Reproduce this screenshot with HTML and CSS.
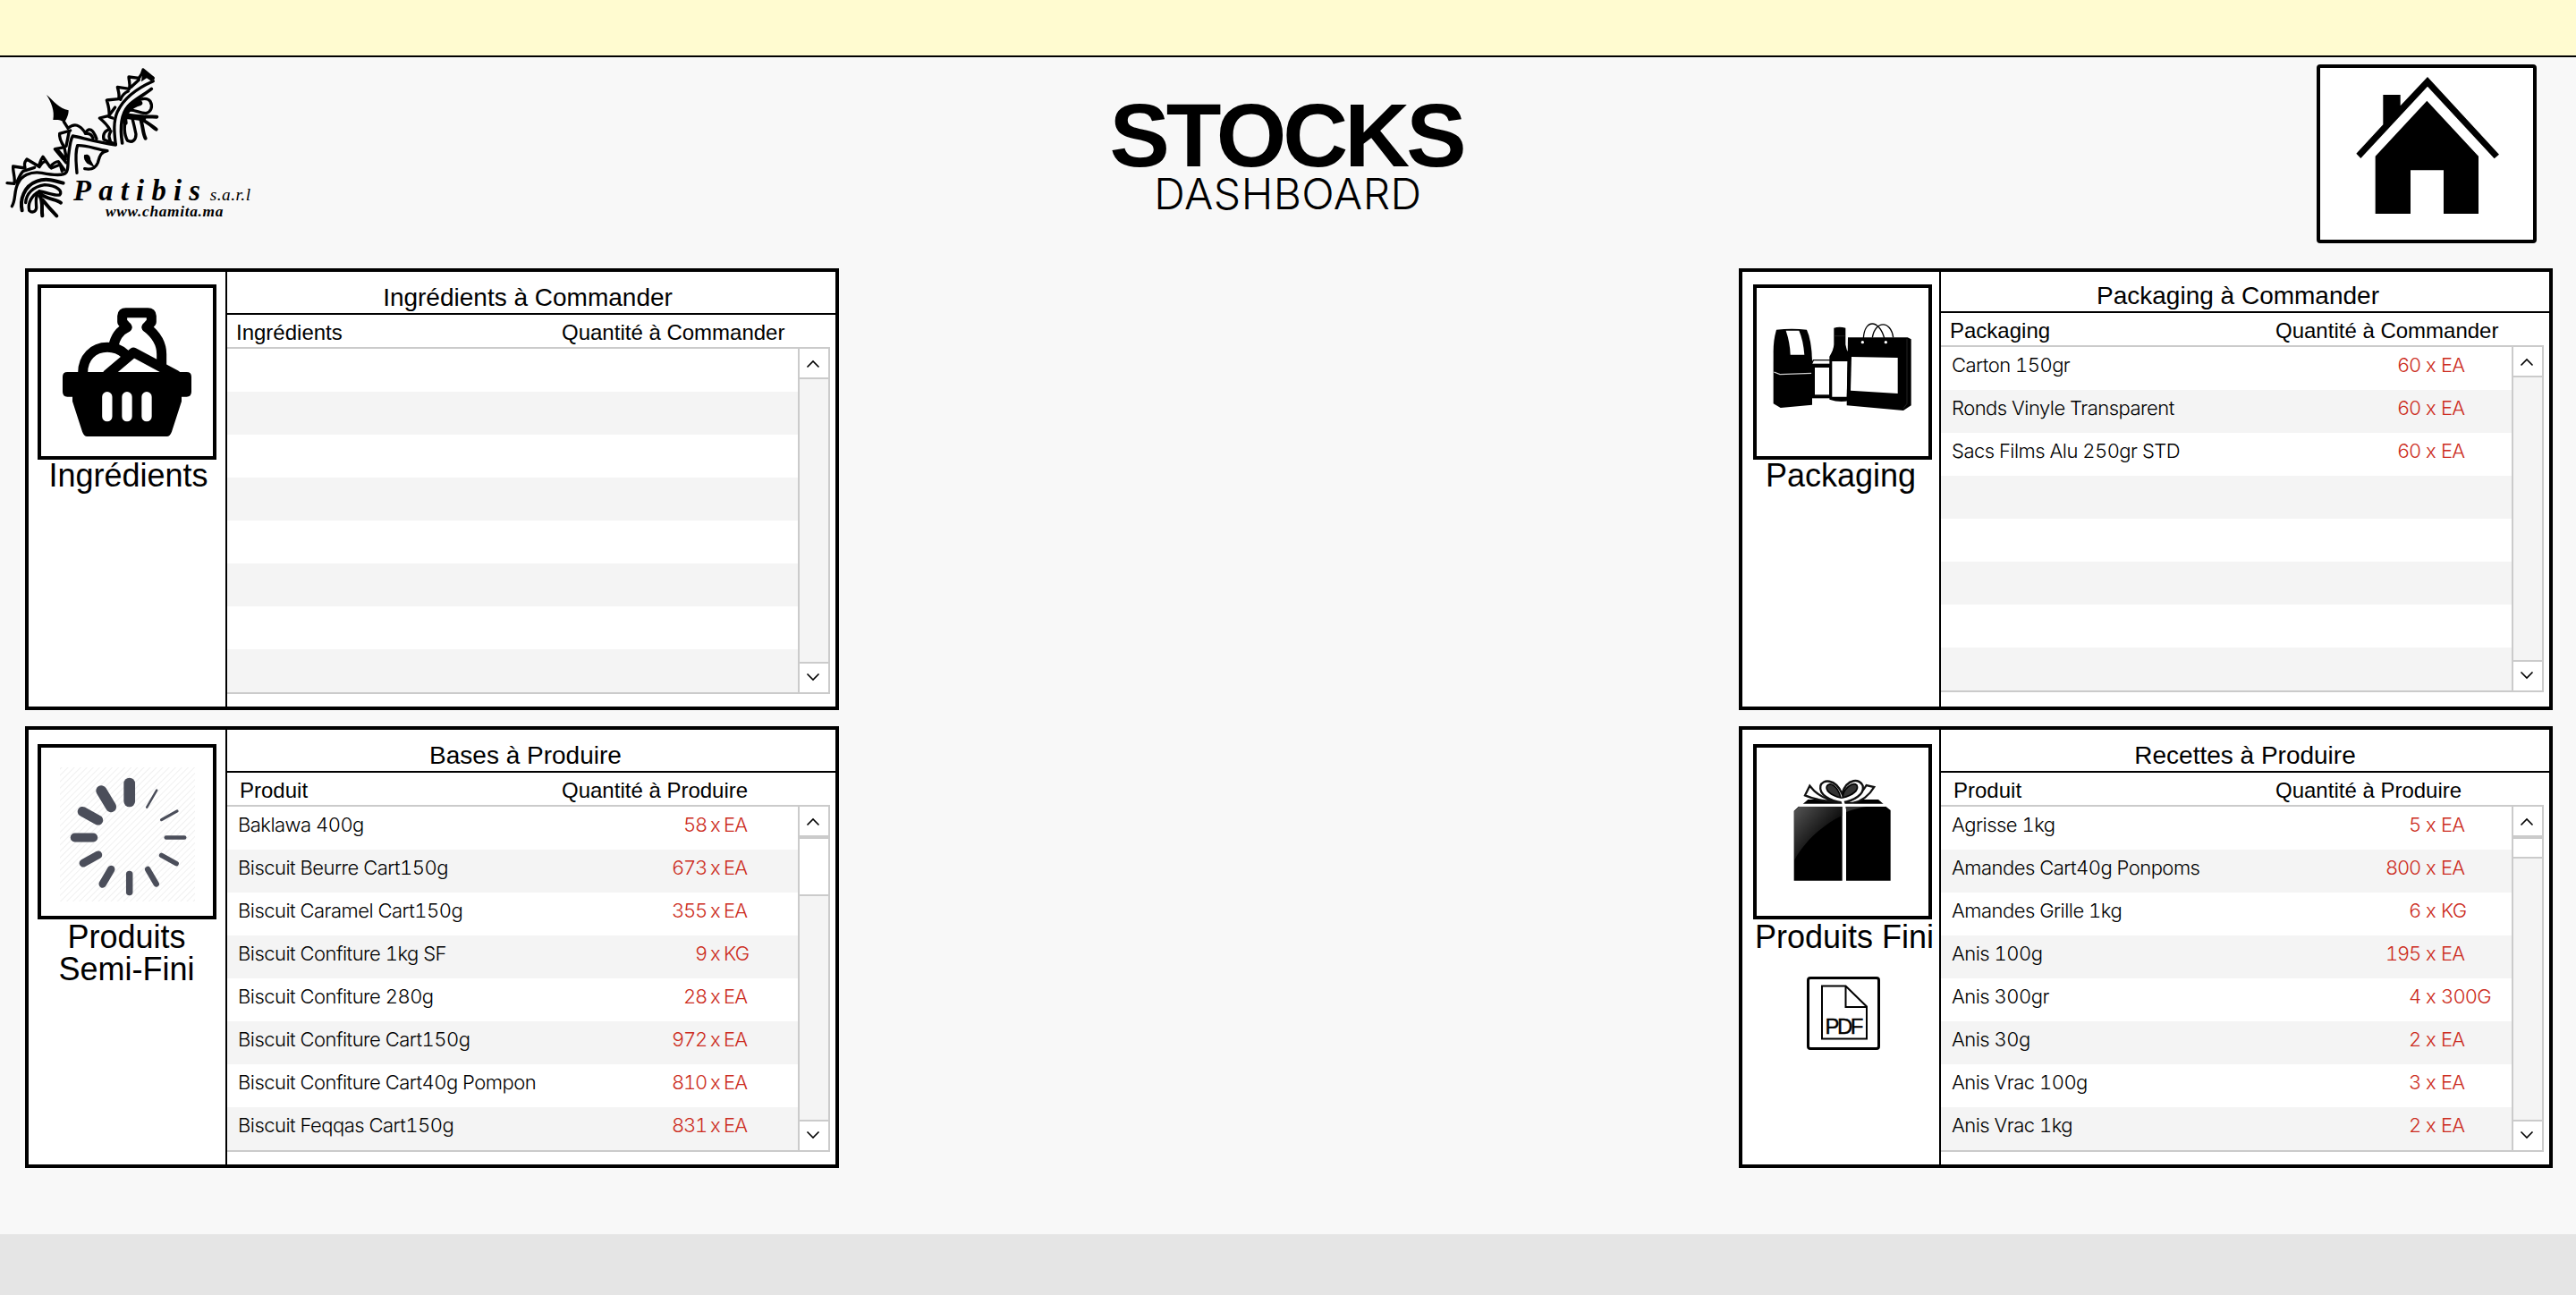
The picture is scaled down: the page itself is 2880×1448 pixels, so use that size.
FILE: index.html
```html
<!DOCTYPE html>
<html lang="fr">
<head>
<meta charset="utf-8">
<title>Stocks Dashboard</title>
<link rel="stylesheet" href="styles.css">
</head>
<body>
<div class="topbar"></div>
<header class="header">
  <svg class="logo" viewBox="0 42 900 588" width="300" height="196" aria-label="Patibis s.a.r.l">
    <g fill="none" stroke="#000" stroke-width="10" stroke-linecap="round" stroke-linejoin="round">
      <path d="M40 542C54 520 46 492 60 466C72 440 100 424 140 430C170 436 195 440 214 434C232 428 226 400 230 370C234 340 236 318 244 306C276 312 320 326 388 336C384 300 378 262 394 224C412 186 450 150 514 122"/>
      <path d="M24 464L48 466C52 445 42 425 44 408L84 414C82 402 80 396 90 384L130 408C134 396 136 386 144 376L168 410C178 398 186 392 196 392L216 420" />
      <path d="M56 462C66 440 70 430 78 424L116 412M132 410C138 400 146 392 152 392M172 414L202 402L208 424"/>
      <path d="M222 396L184 350L216 344C204 326 198 310 200 298L236 288"/>
      <path d="M220 384L196 356M216 346L222 376"/>
      <path d="M214 258L228 280C250 262 268 268 286 296C298 276 312 282 324 316M286 298C300 296 308 300 312 314M232 290L222 340"/>
      <path d="M388 334L348 318C344 300 352 288 368 284C358 266 346 256 334 246L366 238C368 216 362 200 358 186L398 182C402 166 396 152 394 142L434 148C438 132 432 120 432 108L466 112C476 100 478 94 480 84L514 112"/>
      <path d="M372 330C366 312 362 304 372 290M366 242L378 246M370 232L386 210M404 184C410 168 420 160 430 156M440 142L466 118"/>
      <path d="M258 430C256 400 250 366 260 338C290 336 320 350 360 356C336 360 334 376 328 396C320 416 304 420 284 416"/>
      <path d="M74 556C66 520 80 474 124 458C154 446 186 456 212 464" stroke-width="12"/>
      <path d="M86 530C88 500 110 476 150 470C192 472 212 492 200 504C186 508 160 496 132 492"/>
      <path d="M132 492C108 504 92 530 98 556C108 566 120 560 122 548C122 530 116 512 132 492" stroke-width="10"/>
      <path d="M134 508C146 530 138 550 142 574M142 520C158 540 176 560 190 574M136 500C160 520 190 518 204 530" stroke-width="12"/>
      <path d="M410 330C404 290 404 236 430 206C450 184 484 168 508 148" stroke-width="11"/>
      <path d="M430 212C456 184 490 172 504 190C514 208 506 226 490 230C466 230 450 216 432 220"/>
      <path d="M424 240C414 266 416 304 428 322C444 330 456 320 456 300C450 270 446 256 442 240" />
      <path d="M470 246C480 270 478 296 488 314M476 252C496 260 512 276 524 284M460 240C484 244 506 240 526 242" stroke-width="12"/>
      <path d="M420 262C414 230 434 206 470 196" stroke-width="16"/>
      <path d="M430 240L480 246" stroke-width="20"/>
    </g>
    <path d="M156 168C180 188 198 214 230 220C230 238 222 250 216 262C204 250 190 252 178 252C184 222 172 194 156 168ZM478 86L516 108L510 124L492 112L474 124ZM282 370C296 364 304 374 304 386L318 412L292 398C284 390 280 382 282 370Z"/>
    <text class="logo-name" x="246" y="522" textLength="426">Patibis</text>
    <text class="logo-suffix" x="704" y="522" textLength="136">s.a.r.l</text>
    <text class="logo-url" x="354" y="575" textLength="394">www.chamita.ma</text>
  </svg>
  <div class="heading">
    <h1>STOCKS</h1>
    <p>DASHBOARD</p>
  </div>
  <a class="home" href="#" aria-label="Accueil">
    <svg viewBox="72 78 714 576" width="238" height="192">
      <path d="M432 108L672 368L656 382L432 140L208 381L193 365L283 268V168H341V205Z"/>
      <path d="M430 188L603 374V567H486V421H375V567H257V374Z"/>
    </svg>
  </a>
</header>

<main class="board">
  <section class="card ingredients">
    <div class="side">
      <div class="tile">
        <svg viewBox="78 96 576 564" width="192" height="188">
          <g fill="none" stroke="#000" stroke-width="33" stroke-linejoin="round" stroke-linecap="round">
            <path d="M366 228C340 240 326 262 320 292M432 228C468 256 482 290 482 318V360"/>
            <path d="M366 228L350 210V190Q350 179 362 179H436Q448 179 448 190V210L432 228"/>
            <path d="M218 380C218 330 252 295 300 295C326 295 345 304 360 318"/>
            <path d="M300 386L388 312L530 388"/>
          </g>
          <path d="M166 378H566Q582 378 582 394V444Q582 461 566 461H549V476L516 578Q510 594 500 594H232Q222 594 216 578L183 476V461H166Q150 461 150 444V394Q150 378 166 378Z"/>
          <path d="M299.500 461V527M366 461V527M432 461V527" stroke="#fff" stroke-width="34" stroke-linecap="round"/>
        </svg>
      </div>
      <div class="label">Ingrédients</div>
    </div>
    <div class="main">
      <h2>Ingrédients à Commander</h2>
      <div class="cols"><span>Ingrédients</span><span>Quantité à Commander</span></div>
      <div class="list">
        <ul class="rows"><li></li><li></li><li></li><li></li><li></li><li></li><li></li><li></li></ul>
        <div class="scroll">
          <div class="btn"><svg viewBox="0 0 32 32"><path d="M8.500 20.500L15 14L21.500 20.500"/></svg></div>
          <div class="track"></div>
          <div class="btn"><svg viewBox="0 0 32 32"><path d="M8.500 11.500L15 18L21.500 11.500"/></svg></div>
        </div>
      </div>
    </div>
  </section>

  <section class="card packaging">
    <div class="side">
      <div class="tile">
        <svg viewBox="102 96 576 564" width="192" height="188">
          <path d="M168 236Q220 230 270 236Q286 270 288 340V488L182 498L158 484V310Q158 270 168 236Z"/>
          <path d="M200 239H244Q258 270 262 320H215Q214 280 200 239Z" fill="#fff"/>
          <path d="M160 378L180 386L286 382" fill="none" stroke="#ccc" stroke-width="4"/>
          <path d="M286 352L292 338H352" fill="none" stroke="#000" stroke-width="4"/>
          <path d="M286 350H352V466H286Z"/>
          <path d="M297 363H345V454H297Z" fill="#fff"/>
          <path d="M361 230Q380 224 400 230V286Q402 304 412 316V474Q380 482 346 470V326Q360 304 361 286Z"/>
          <path d="M355 342H407L404 461H355Z" fill="#fff"/>
          <path d="M362 257H398" stroke="#333" stroke-width="2"/>
          <path d="M408 262L608 262L620 268V490L594 507L404 490Z"/>
          <path d="M420 327L575 330V450L417 440Z" fill="#fff"/>
          <path d="M606 266V484L594 500" fill="none" stroke="#333" stroke-width="2"/>
          <path d="M460 264C464 200 512 200 530 264M490 262C500 204 552 204 560 262" fill="none" stroke="#000" stroke-width="4"/>
          <g fill="#fff"><circle cx="457" cy="278" r="5"/><circle cx="535" cy="278" r="5"/></g>
        </svg>
      </div>
      <div class="label">Packaging</div>
    </div>
    <div class="main">
      <h2>Packaging à Commander</h2>
      <div class="cols"><span>Packaging</span><span>Quantité à Commander</span></div>
      <div class="list">
        <ul class="rows">
          <li><span>Carton 150gr</span><b>60</b><i>x</i><em>EA</em></li>
          <li><span>Ronds Vinyle Transparent</span><b>60</b><i>x</i><em>EA</em></li>
          <li><span>Sacs Films Alu 250gr STD</span><b>60</b><i>x</i><em>EA</em></li>
          <li></li><li></li><li></li><li></li><li></li>
        </ul>
        <div class="scroll">
          <div class="btn"><svg viewBox="0 0 32 32"><path d="M8.500 20.500L15 14L21.500 20.500"/></svg></div>
          <div class="track"></div>
          <div class="btn"><svg viewBox="0 0 32 32"><path d="M8.500 11.500L15 18L21.500 11.500"/></svg></div>
        </div>
      </div>
    </div>
  </section>

  <section class="card bases">
    <div class="side">
      <div class="tile">
        <svg viewBox="46 836 192 188" width="192" height="188">
          <defs><pattern id="hatch" width="5" height="5" patternUnits="userSpaceOnUse" patternTransform="rotate(45)"><path d="M0 0V5" stroke="#f0f0f0" stroke-width="2"/></pattern></defs>
          <path d="M67 858H218V1008H67Z" fill="url(#hatch)"/>
          <g transform="translate(144.700 936.500)" stroke="#4b4e5a" stroke-linecap="round">
            <path d="M0 -40.500V-60.500" stroke-width="12.700"/>
            <path d="M0 -39V-61" stroke-width="2.500" transform="rotate(30)"/>
            <path d="M0 -41V-61" stroke-width="3.200" transform="rotate(61)"/>
            <path d="M0 -41V-61.500" stroke-width="4.500" transform="rotate(90)"/>
            <path d="M0 -41V-60" stroke-width="5.500" transform="rotate(119)"/>
            <path d="M0 -41V-60" stroke-width="6.500" transform="rotate(150)"/>
            <path d="M0 -41V-61" stroke-width="7.500" transform="rotate(180)"/>
            <path d="M0 -41V-60" stroke-width="8.500" transform="rotate(210)"/>
            <path d="M0 -40V-59" stroke-width="9" transform="rotate(241)"/>
            <path d="M0 -40.500V-61" stroke-width="10" transform="rotate(270)"/>
            <path d="M0 -40V-60" stroke-width="11" transform="rotate(299)"/>
            <path d="M0 -40V-61" stroke-width="12" transform="rotate(329)"/>
          </g>
        </svg>
      </div>
      <div class="label">Produits<br>Semi-Fini</div>
    </div>
    <div class="main">
      <h2>Bases à Produire</h2>
      <div class="cols"><span>Produit</span><span>Quantité à Produire</span></div>
      <div class="list">
        <ul class="rows">
          <li><span>Baklawa 400g</span><b>58</b><i>x</i><em>EA</em></li>
          <li><span>Biscuit Beurre Cart150g</span><b>673</b><i>x</i><em>EA</em></li>
          <li><span>Biscuit Caramel Cart150g</span><b>355</b><i>x</i><em>EA</em></li>
          <li><span>Biscuit Confiture 1kg SF</span><b>9</b><i>x</i><em>KG</em></li>
          <li><span>Biscuit Confiture 280g</span><b>28</b><i>x</i><em>EA</em></li>
          <li><span>Biscuit Confiture Cart150g</span><b>972</b><i>x</i><em>EA</em></li>
          <li><span>Biscuit Confiture Cart40g Pompon</span><b>810</b><i>x</i><em>EA</em></li>
          <li><span>Biscuit Feqqas Cart150g</span><b>831</b><i>x</i><em>EA</em></li>
        </ul>
        <div class="scroll">
          <div class="btn"><svg viewBox="0 0 32 32"><path d="M8.500 20.500L15 14L21.500 20.500"/></svg></div>
          <div class="track"><div class="thumb"></div></div>
          <div class="btn"><svg viewBox="0 0 32 32"><path d="M8.500 11.500L15 18L21.500 11.500"/></svg></div>
        </div>
      </div>
    </div>
  </section>

  <section class="card recettes">
    <div class="side">
      <div class="tile">
        <svg viewBox="102 108 576 564" width="192" height="188">
          <defs><linearGradient id="gloss" x1="0" y1="0" x2="0.700" y2="0.700"><stop offset="0" stop-color="#555"/><stop offset="1" stop-color="#000"/></linearGradient></defs>
          <path d="M256 298L274 282H510L528 298Z"/>
          <path d="M227 554V320L243 305H389V554ZM402 554V316L398 305H535L551 318V554Z"/>
          <path d="M228 486V320L244 306H388V336C330 364 270 412 228 486Z" fill="url(#gloss)"/>
          <path d="M402 324V306H470Q440 310 402 324Z" fill="#333"/>
          <path d="M386 292C340 288 300 284 264 268L280 236L296 254Q330 284 386 292ZM394 292Q440 284 470 234L496 240Q470 284 424 294Z" fill="#fff" stroke="#111" stroke-width="7"/>
          <path d="M388 292C348 288 310 264 316 236C322 214 366 210 388 262C406 208 450 212 458 236C464 264 430 286 388 292Z" fill="#fff" stroke="#111" stroke-width="7"/>
          <path d="M384 276C350 268 330 250 338 236C346 222 374 234 384 276ZM390 276C392 244 424 222 438 234C446 250 424 268 390 276Z" fill="#333" stroke="#000" stroke-width="5"/>
          <path d="M244 301H536M388 280L396 306V554" fill="none" stroke="#fff" stroke-width="9"/>
        </svg>
      </div>
      <div class="label">Produits Fini</div>
      <div class="pdf">
        <svg viewBox="0 0 76 76" width="76" height="76">
          <path d="M14 7.500H40.500L64 30.500V66.500H14ZM40.500 7.500V31H64" fill="none" stroke="#000" stroke-width="2"/>
          <text x="17.500" y="61" textLength="43">PDF</text>
        </svg>
      </div>
    </div>
    <div class="main">
      <h2>Recettes à Produire</h2>
      <div class="cols"><span>Produit</span><span>Quantité à Produire</span></div>
      <div class="list">
        <ul class="rows">
          <li><span>Agrisse 1kg</span><b>5</b><i>x</i><em>EA</em></li>
          <li><span>Amandes Cart40g Ponpoms</span><b>800</b><i>x</i><em>EA</em></li>
          <li><span>Amandes Grille 1kg</span><b>6</b><i>x</i><em>KG</em></li>
          <li><span>Anis 100g</span><b>195</b><i>x</i><em>EA</em></li>
          <li><span>Anis 300gr</span><b>4</b><i>x</i><em>300G</em></li>
          <li><span>Anis 30g</span><b>2</b><i>x</i><em>EA</em></li>
          <li><span>Anis Vrac 100g</span><b>3</b><i>x</i><em>EA</em></li>
          <li><span>Anis Vrac 1kg</span><b>2</b><i>x</i><em>EA</em></li>
        </ul>
        <div class="scroll">
          <div class="btn"><svg viewBox="0 0 32 32"><path d="M8.500 20.500L15 14L21.500 20.500"/></svg></div>
          <div class="track"><div class="thumb"></div></div>
          <div class="btn"><svg viewBox="0 0 32 32"><path d="M8.500 11.500L15 18L21.500 11.500"/></svg></div>
        </div>
      </div>
    </div>
  </section>
</main>
<footer class="footer"></footer>
</body>
</html>
```
FILE: styles.css
```css
* { box-sizing: border-box; margin: 0; padding: 0; }
body {
  display: flex;
  flex-direction: column;
  height: 1448px;
  background: #f8f8f8;
  color: #000;
  font-family: "Liberation Sans", Arial, sans-serif;
  overflow: hidden;
}
svg { display: block; }
.topbar { height: 64px; flex: none; background: #fffbd0; border-bottom: 2px solid #000; }
.footer { flex: 1; background: #e5e5e5; }

.header {
  display: grid;
  grid-template-columns: 1fr 420px 1fr;
  height: 236px;
  flex: none;
}
.logo text { font-family: "Liberation Serif", serif; font-style: italic; }
.logo .logo-name { font-size: 98px; font-weight: bold; }
.logo .logo-suffix { font-size: 58px; }
.logo .logo-url { font-size: 52px; font-weight: bold; }
.heading { padding-top: 47px; text-align: center; }
.heading h1 {
  font-size: 101px;
  line-height: 80px;
  letter-spacing: -4px;
  padding-right: 4px;
}
.heading p {
  padding-top: 2px;
  font: 300 48px/48px Inter, sans-serif;
  letter-spacing: 0.5px;
}
.home {
  justify-self: end;
  width: 246px;
  height: 200px;
  margin: 8px 44px 0 0;
  border: 4px solid #000;
  border-radius: 4px;
  background: #fff;
}

.board {
  display: grid;
  grid-template-columns: 910px 910px;
  grid-auto-rows: 494px;
  justify-content: space-between;
  row-gap: 18px;
  height: 1080px;
  flex: none;
  padding: 0 26px 0 28px;
}
.card {
  display: flex;
  border: 4px solid #000;
  background: #fff;
}
.side {
  width: 222px;
  flex: none;
  padding: 14px 10px 0;
  border-right: 2px solid #000;
}
.packaging .side, .recettes .side { padding-left: 12px; padding-right: 8px; }
.bases .side, .recettes .side { padding-top: 16px; }
.tile { width: 200px; height: 196px; border: 4px solid #000; }
.label {
  width: 203px;
  font-size: 36px;
  line-height: 36px;
  text-align: center;
  white-space: nowrap;
}
.packaging .label { width: 196px; }
.bases .label { width: 199px; padding-top: 2px; }
.recettes .label { width: 204px; padding-top: 2px; }
.pdf {
  width: 82px;
  height: 82px;
  margin: 26px 0 0 60px;
  border: 3px solid #000;
  border-radius: 4px;
}
.pdf text { font-size: 24px; stroke: #000; stroke-width: 0.4px; }

.main { flex: 1; }
h2 {
  display: flex;
  align-items: flex-end;
  justify-content: center;
  height: 48px;
  padding-right: 8px;
  border-bottom: 2px solid #000;
  font-size: 28px;
  font-weight: 400;
  line-height: 34px;
}
.packaging h2 { height: 46px; padding-right: 16px; }
.bases h2 { padding-right: 13px; }
.recettes h2 { padding-right: 0; }
.cols {
  display: grid;
  grid-template-columns: 374px 1fr;
  align-items: end;
  height: 36px;
  font-size: 24px;
  line-height: 32px;
}
.cols span:first-child { padding-left: 10px; }
.bases .cols span:first-child, .recettes .cols span:first-child { padding-left: 14px; }

.list {
  display: flex;
  width: 674px;
  height: 388px;
  border: solid #cbcbcb;
  border-width: 2px 0;
}
.rows { flex: 1; list-style: none; }
.rows li {
  display: grid;
  grid-template-columns: 428px 96px 19px 1fr;
  height: 48px;
  padding-left: 12px;
  font: 330 22px/40px Inter, sans-serif;
  font-variant-numeric: tabular-nums;
  letter-spacing: -0.52px;
  white-space: nowrap;
}
.rows li:nth-child(even) { background: #f4f4f4; }
.rows b, .rows i, .rows em { font-weight: 330; font-style: normal; color: #cc2b20; }
.rows b { text-align: right; letter-spacing: -1.2px; }
.rows em { letter-spacing: -0.8px; }
.rows i { padding-left: 4px; }
.packaging .rows li, .recettes .rows li { grid-template-columns: 428px 96px 23px 1fr; }
.packaging .rows i, .recettes .rows i { padding-left: 6px; }
.scroll {
  display: flex;
  flex-direction: column;
  width: 36px;
  border: solid #cbcbcb;
  border-width: 0 2px;
  background: #f4f4f4;
}
.btn { height: 32px; background: #fff; }
.btn path { fill: none; stroke: #000; stroke-width: 1.6; }
.track { flex: 1; border: solid #cbcbcb; border-width: 2px 0; }
.thumb {
  height: 66px;
  border: solid #cbcbcb;
  border-width: 2px 0;
  background: #fff;
}
.recettes .thumb { height: 24px; }
```
